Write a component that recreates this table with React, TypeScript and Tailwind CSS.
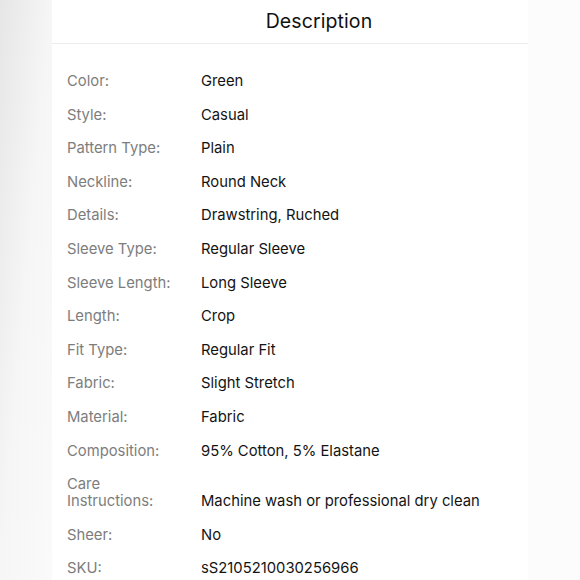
const rows: [string, string][] = [
  ["Color:", "Green"],
  ["Style:", "Casual"],
  ["Pattern Type:", "Plain"],
  ["Neckline:", "Round Neck"],
  ["Details:", "Drawstring, Ruched"],
  ["Sleeve Type:", "Regular Sleeve"],
  ["Sleeve Length:", "Long Sleeve"],
  ["Length:", "Crop"],
  ["Fit Type:", "Regular Fit"],
  ["Fabric:", "Slight Stretch"],
  ["Material:", "Fabric"],
  ["Composition:", "95% Cotton, 5% Elastane"],
  ["Care Instructions:", "Machine wash or professional dry clean"],
  ["Sheer:", "No"],
  ["SKU:", "sS2105210030256966"],
];

export default function App() {
  return (
    <div className="flex h-[580px] w-[580px] overflow-hidden bg-[#fcfcfc] font-['Inter',sans-serif]">
      {/* left edge of the phone screen */}
      <div className="w-[52px] shrink-0 bg-gradient-to-br from-[#e6e6e6] via-[#f6f6f6] to-[#fafafa]" />

      <div className="flex w-[476px] shrink-0 flex-col bg-white">
        <div className="flex h-[44px] items-center justify-center border-b border-[#ececec] pl-[58px]">
          <h1 className="text-[19.5px] font-normal tracking-[0.1px] text-[#111]">Description</h1>
        </div>

        <div className="flex flex-col gap-[16.6px] pl-[15px] pt-[29px]">
          {rows.map(([label, value]) => (
            <div key={label} className="flex items-end text-[14.8px] leading-[17px]">
              <div className="w-[134px] shrink-0 pr-[18px] text-[#7d7d7d]">{label}</div>
              <div className="text-[#141414]">{value}</div>
            </div>
          ))}
        </div>
      </div>
    </div>
  );
}
